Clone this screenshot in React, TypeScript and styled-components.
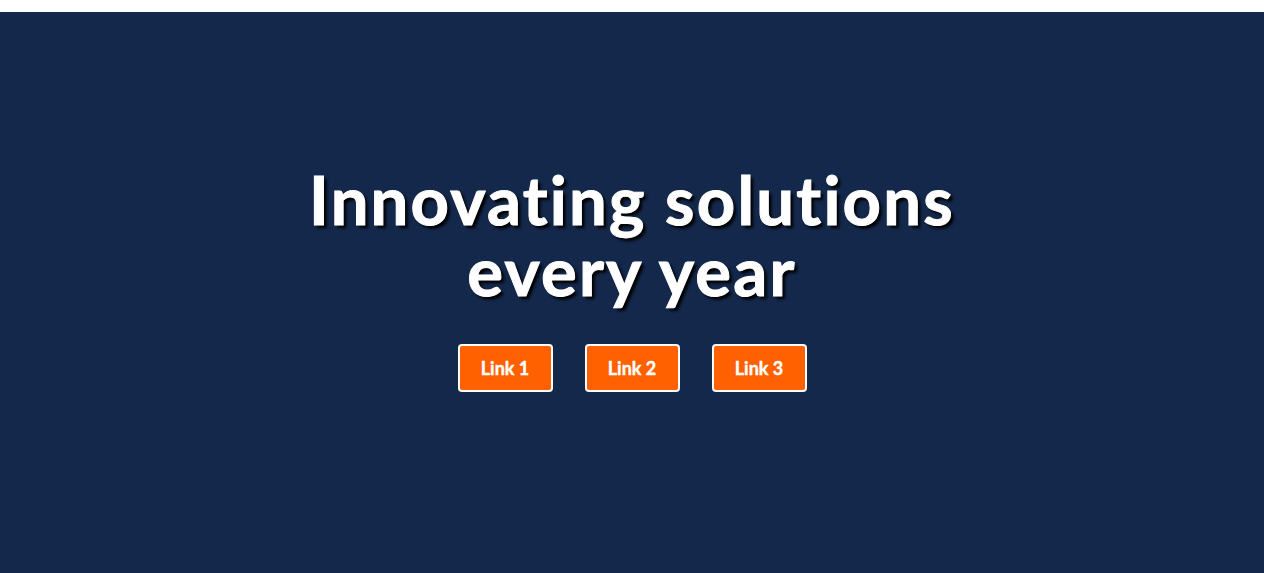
import React from "react";
import styled, { createGlobalStyle } from "styled-components";

const Global = createGlobalStyle`
  html, body { margin: 0; padding: 0; background: #ffffff; }
  body { font-family: Lato, "Open Sans", sans-serif; }
`;

const Page = styled.div`
  padding-top: 12px;
  background: #ffffff;
`;

const Hero = styled.section`
  background: #14284b;
  height: 561px;
  display: flex;
  flex-direction: column;
  align-items: center;
  padding-top: 152px;
  box-sizing: border-box;
`;

const Title = styled.h1`
  margin: 0;
  color: #ffffff;
  font-family: Lato, sans-serif;
  font-weight: 700;
  font-size: 67px;
  line-height: 71px;
  letter-spacing: 2.2px;
  text-align: center;
  font-variant-ligatures: none;
  -webkit-text-stroke: 1px #ffffff;
  text-shadow: 3px 3px 3px #000000;
`;

const Links = styled.nav`
  display: flex;
  gap: 32px;
  margin-top: 38px;
`;

const LinkButton = styled.a`
  display: flex;
  align-items: center;
  justify-content: center;
  width: 95px;
  height: 48px;
  box-sizing: border-box;
  background: #ff6000;
  border: 2px solid #ffffff;
  border-radius: 4px;
  color: #ffffff;
  font-family: Lato, sans-serif;
  font-weight: 700;
  font-size: 18px;
  text-decoration: none;
  font-variant-ligatures: none;
  -webkit-text-stroke: 0.4px #ffffff;
`;

export default function App() {
  return (
    <Page>
      <Global />
      <Hero>
        <Title>
          Innovating solutions
          <br />
          every year
        </Title>
        <Links>
          <LinkButton href="#">Link 1</LinkButton>
          <LinkButton href="#">Link 2</LinkButton>
          <LinkButton href="#">Link 3</LinkButton>
        </Links>
      </Hero>
    </Page>
  );
}
